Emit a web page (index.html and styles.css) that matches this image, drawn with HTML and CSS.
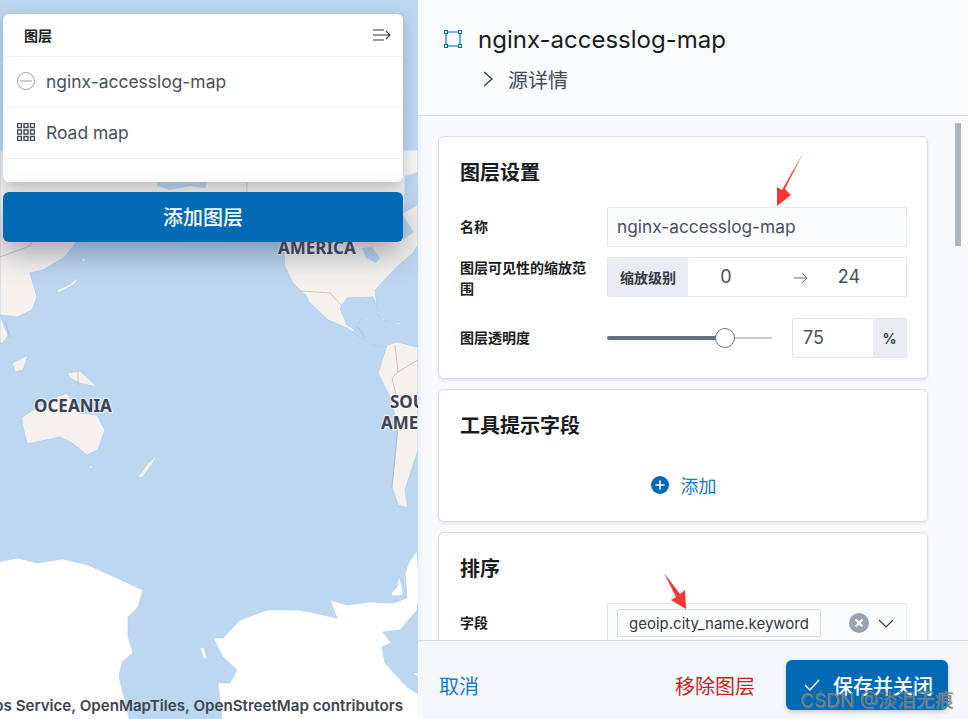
FILE: index.html
```html
<!DOCTYPE html>
<html lang="zh">
<head>
<meta charset="utf-8">
<title>nginx-accesslog-map</title>
<link rel="stylesheet" href="styles.css">
</head>
<body>
<div class="app">
  <section class="map">
    <svg class="map-art" viewBox="0 0 418 719" width="418" height="719">
      <g class="land">
        <path d="M0 150L418 150L418 160L418 245L413 253L397 267L375 290L377 307L373 297L347 298L340 308L347 325L355 330L362 318L353 332L370 345L383 347L370 344L347 328L328 320L310 303L300 290L293 283L285 267L283 241L77 241L65 257L43 270L30 273L37 297L32 310L17 317L0 315Z"/>
        <path d="M0 315L8 335L3 343L0 343Z"/>
        <path d="M57 290L70 284L78 277L76 283L68 288L58 293Z"/>
        <path d="M80 259L87 258L84 262Z"/>
        <path d="M377 315L388 321L383 320Z"/>
        <path d="M396 322L401 323L398 325Z"/>
        <path d="M12 363L28 355L23 370L15 372Z"/>
        <path d="M67 373L80 371L90 380L97 387L80 383L70 378Z"/>
        <path d="M22 417L33 410L57 397L67 393L80 413L97 415L105 430L98 450L87 455L72 443L60 437L27 444L22 423Z"/>
        <path d="M88 464L93 467L91 469Z"/>
        <path d="M137 478L148 463L157 455L155 460L143 477Z"/>
        <path d="M397 342L418 347L418 450L405 490L408 508L398 505L392 487L398 427L390 397L378 373L387 345Z"/>
      </g>
      <g class="water">
        <path d="M403 0H418V18L414 22L403 18Z"/>
        <path d="M403 44L410 43L417 34L418 47L403 48Z"/>
        <path d="M403 66L405 66L412 58L416 47L418 47V92L404 96L403 90Z"/>
        <path d="M404 104L418 110V150L403 150Z"/>
        <path d="M157 182L207 182L205 188L190 186L170 190L157 186Z"/>
        <path d="M405 176L418 172L418 205L402 214L414 232L403 240L403 215Z"/>
        <path d="M362 248L372 247L380 258L376 263L366 258Z"/>
        <path d="M302 292L306 294L313 311L309 306Z"/>
      </g>
      <g class="border">
        <path d="M0 257L30 246L32 241M247 182L247 192M5 320L10 338M78 371L78 385M301 291L330 293L342 306M358 327L365 338M395 345L398 372L392 378M398 372L418 360M392 378L396 395L418 400M398 427L392 487"/>
      </g>
      <g class="ice">
        <path d="M-2 562L18 558L37 563L63 559L88 565L117 578L143 590L138 607L128 617L128 637L133 653L122 662L119 677L130 721L-2 721Z"/>
        <path d="M222 721L218 683L230 683L237 670L223 657L213 638L223 638L240 620L267 610L300 610L337 618L330 600L347 605L370 602L393 603L407 598L405 573L409 562L417 551L420 590L417 610L400 630L383 632L391 643L382 647L385 663L407 687L420 695L420 721Z"/>
        <path d="M391 593L397 587L399 575L402 587L403 595L393 596Z"/>
        <path d="M412 673L420 673L420 678Z"/>
        <path d="M200 648L204 647L207 660L203 657Z"/>
      </g>
      <g class="labels">
        <text x="278" y="254">AMERICA</text>
        <text x="34" y="412">OCEANIA</text>
        <text x="390" y="408">SOU</text>
        <text x="381" y="429">AME</text>
      </g>
    </svg>
    <div class="overlay">
      <div class="toc">
        <div class="toc-head">
          <span class="toc-title">图层</span>
          <svg class="toc-collapse" viewBox="0 0 18 12" width="18" height="12"><path d="M0 1H11M0 6H17M0 11H11M13 2L17 6L13 10"/></svg>
        </div>
        <div class="toc-row">
          <svg class="toc-icon" viewBox="0 0 18 18" width="18" height="18"><circle class="ring" cx="9" cy="9" r="8.5"/><path class="ring" d="M3 9H15"/></svg>
          <span>nginx-accesslog-map</span>
        </div>
        <div class="toc-row">
          <svg class="toc-icon" viewBox="0 0 18 18" width="18" height="18"><path class="tiles" d="M.5.5h4v4h-4zM7 .5h4v4h-4zM13.500.5h4v4h-4zM.5 7h4v4h-4zM7 7h4v4h-4zM13.500 7h4v4h-4zM.5 13.500h4v4h-4zM7 13.500h4v4h-4zM13.500 13.500h4v4h-4z"/></svg>
          <span>Road map</span>
        </div>
      </div>
      <button class="add-layer" type="button">添加图层</button>
    </div>
    <div class="attribution">Elastic Maps Service, OpenMapTiles, OpenStreetMap contributors</div>
  </section>

  <section class="flyout">
    <header class="fly-head">
      <div class="fly-title">
        <svg class="layer-icon" viewBox="0 0 18 18" width="18" height="18"><path d="M3.500 2H14.500M3.500 16H14.500M2 3.500V14.500M16 3.500V14.500M.5.5h3v3h-3zM14.500.5h3v3h-3zM.5 14.500h3v3h-3zM14.500 14.500h3v3h-3z"/></svg>
        <h1>nginx-accesslog-map</h1>
      </div>
      <div class="fly-source">
        <svg class="chev" viewBox="0 0 10 16" width="10" height="16"><path d="M1 1L9 8L1 15"/></svg>
        <span>源详情</span>
      </div>
    </header>

    <div class="fly-body">
      <div class="card">
        <h2>图层设置</h2>
        <div class="row">
          <label>名称</label>
          <div class="field text-field">nginx-accesslog-map</div>
        </div>
        <div class="row">
          <label class="label-two">图层可见性的缩放范围</label>
          <div class="field range-field">
            <span class="prepend">缩放级别</span>
            <span class="range-a">0</span>
            <svg class="range-arrow" viewBox="0 0 14 12" width="14" height="12"><path d="M0 6H13M8 1L13 6L8 11"/></svg>
            <span class="range-b">24</span>
          </div>
        </div>
        <div class="row row-wide">
          <label>图层透明度</label>
          <div class="opacity">
            <div class="slider"><div class="slider-fill"></div><div class="slider-thumb"></div></div>
            <div class="field pct-field"><span class="pct-val">75</span><span class="pct-unit">%</span></div>
          </div>
        </div>
      </div>

      <div class="card">
        <h2>工具提示字段</h2>
        <div class="add-row">
          <svg viewBox="0 0 18 18" width="18" height="18"><circle class="plus-bg" cx="9" cy="9" r="9"/><path class="plus" d="M9 4.500V13.500M4.500 9H13.500"/></svg>
          <span>添加</span>
        </div>
      </div>

      <div class="card">
        <h2>排序</h2>
        <div class="row">
          <label>字段</label>
          <div class="field combo">
            <span class="pill">geoip.city_name.keyword</span>
            <span class="combo-tools">
              <svg viewBox="0 0 20 20" width="20" height="20"><circle class="clear-bg" cx="10" cy="10" r="10"/><path class="clear-x" d="M6.500 6.500L13.500 13.500M13.500 6.500L6.500 13.500"/></svg>
              <svg class="combo-chev" viewBox="0 0 16 9" width="16" height="9"><path d="M1 1L8 8L15 1"/></svg>
            </span>
          </div>
        </div>
      </div>
      <div class="scrollbar"></div>
    </div>

    <footer class="fly-foot">
      <a class="link">取消</a>
      <div class="foot-right">
        <a class="link danger">移除图层</a>
        <button class="save" type="button">
          <svg viewBox="0 0 16 12" width="16" height="12"><path d="M1 6L6 11L15 1"/></svg>
          <span>保存并关闭</span>
        </button>
      </div>
    </footer>
  </section>
</div>
<svg class="annotations" viewBox="0 0 968 719" width="968" height="719">
  <path d="M803 153L785 189L791 195L777 206L777 187L782 190Z"/>
  <path d="M664 573L680 594L685 590L686 609L671 600L676 597Z"/>
</svg>
<div class="watermark">CSDN @淡泪无痕</div>
</body>
</html>
```
FILE: styles.css
```css
* { box-sizing: border-box; }
html, body { margin: 0; height: 100%; overflow: hidden; }
body { font-family: Inter, "Noto Sans CJK SC", "Noto Sans", sans-serif; color: #343741; background: #f5f7fa; }
.app { display: flex; width: 968px; height: 719px; }
.annotations { position: absolute; left: 0; top: 0; display: block; pointer-events: none; }
.annotations path { fill: #fb3434; }

/* map */
.map { position: relative; width: 418px; height: 719px; flex: none; overflow: hidden; background: #bdd7f1; }
.map-art { position: absolute; left: 0; top: 0; display: block; }
.land path { fill: #f5f2ee; stroke: #a9cdf0; stroke-width: .8; }
.water path { fill: #bdd7f1; }
.border path { fill: none; stroke: #b3b0b2; stroke-width: .7; }
.ice path { fill: #fff; stroke: #a9cdf0; stroke-width: .6; }
.labels text { font: 700 17px "Noto Sans", sans-serif; fill: #3e4150; stroke: rgba(255,255,255,.55); stroke-width: 2.500px; paint-order: stroke; }
.overlay { position: relative; display: flex; flex-direction: column; gap: 10px; width: 400px; margin: 14px 0 0 3px; }
.toc { height: 168px; background: #fff; border-radius: 6px; box-shadow: 0 4px 14px rgba(50,60,80,.3); }
.toc-head { display: flex; align-items: center; justify-content: space-between; height: 43px; padding: 0 12px 0 21px; border-bottom: 1px solid #f0f2f5; }
.toc-title { font-size: 14px; font-weight: 700; color: #1a1c21; }
.toc-collapse path { fill: none; stroke: #343741; stroke-width: 1.100; }
.toc-row { display: flex; align-items: center; gap: 11px; height: 51px; padding: 0 0 2px 14px; border-bottom: 1px solid #f0f2f5; font-size: 17.450px; color: #4b4f5b; }
.toc-icon { flex: none; }
.ring { fill: none; stroke: #98a2b3; stroke-width: 1; }
.tiles { fill: none; stroke: #454a56; stroke-width: 1.400; }
.add-layer { height: 50px; padding: 0 0 2px; border: 0; border-radius: 6px; background: #006bb4; color: #fff; font: 500 20px Inter, "Noto Sans CJK SC", sans-serif; box-shadow: 0 12px 30px rgba(50,60,90,.42); }
.attribution { position: absolute; right: 15px; bottom: 4px; font-size: 15.150px; font-weight: 600; color: #3f4450; white-space: nowrap; }

/* flyout */
.flyout { position: relative; display: flex; flex-direction: column; width: 550px; height: 719px; flex: none; background: #f8fafd; box-shadow: inset 6px 0 6px -5px rgba(120,130,150,.15); }
.fly-head { height: 116px; padding: 19px 0 0 26px; background: #fafbfd; border-bottom: 1px solid #d8dde6; }
.fly-title { display: flex; align-items: center; gap: 16px; height: 40px; }
.layer-icon path { fill: none; stroke: #006bb4; stroke-width: 1.100; }
h1 { margin: 0; font-size: 24px; font-weight: 400; color: #1a1c21; }
.fly-source { display: flex; align-items: center; gap: 15px; height: 30px; margin: 5px 0 0 39px; font-size: 20px; color: #454a56; }
.chev { flex: none; }
.chev path { fill: none; stroke: #343741; stroke-width: 1.300; }
.fly-body { position: relative; flex: 1; min-height: 0; overflow: hidden; padding: 20px 0 0 20px; display: flex; flex-direction: column; gap: 10px; }
.card { flex: none; width: 490px; padding: 20px 20px 20px 21px; background: #fff; border: 1px solid #d8dde6; border-radius: 6px; box-shadow: 0 2px 3px rgba(100,110,130,.12); }
h2 { margin: 0 0 18px; font-size: 20px; line-height: 32px; font-weight: 700; color: #1a1c21; }
.row { display: grid; grid-template-columns: 147px 300px; grid-template-rows: 40px; align-items: center; height: 40px; margin-top: 10px; }
h2 + .row { margin-top: 0; }
.row-wide { margin-top: 21px; }
label { padding: 0 10px 2px 0; font-size: 14px; line-height: 21px; font-weight: 600; color: #1a1c21; }
.label-two { padding-bottom: 0; margin-top: 2px; }
.field { height: 40px; background: #fbfcfd; border: 1px solid #e3e7ef; border-radius: 2px; }
.text-field { padding-left: 9px; font-size: 17.300px; line-height: 38px; color: #4b4f5b; }
.range-field { display: flex; align-items: center; font-size: 18px; color: #4b4f5b; background: #fff; }
.prepend { display: flex; align-items: center; justify-content: center; width: 80px; height: 100%; background: #e9edf3; font-size: 14px; font-weight: 600; color: #343741; }
.range-a { width: 76px; margin-top: -2px; text-align: center; }
.range-arrow { margin: 2px 0 0 30px; flex: none; }
.range-arrow path { fill: none; stroke: #69707d; stroke-width: 1; }
.range-b { width: 82px; margin-top: -2px; text-align: center; }
.opacity { display: flex; align-items: center; gap: 20px; }
.slider { position: relative; width: 165px; height: 2px; background: #c2c8d0; }
.slider-fill { width: 118px; height: 4px; margin-top: -1px; background: #69707d; border-radius: 2px; }
.slider-thumb { position: absolute; left: 108px; top: -9px; width: 20px; height: 20px; border-radius: 50%; background: #fff; border: 1.500px solid #69707d; }
.pct-field { display: flex; width: 115px; background: #fff; font-size: 18px; color: #4b4f5b; }
.pct-val { flex: 1; padding-left: 10px; line-height: 38px; }
.pct-unit { display: flex; align-items: center; justify-content: center; width: 33px; background: #e9edf3; font-size: 14px; font-weight: 600; color: #343741; }
.add-row { display: flex; align-items: center; justify-content: center; gap: 12px; height: 36px; margin: 25px 0 -2px; font-size: 18px; color: #1a77bd; }
.plus-bg { fill: #006bb4; }
.plus { fill: none; stroke: #fff; stroke-width: 1.600; }
.combo { display: flex; align-items: center; justify-content: space-between; align-self: start; height: 60px; padding: 0 12px 20px 9px; }
.pill { display: flex; align-items: center; height: 28px; padding: 0 11px; background: #fff; border: 1px solid #d3dae6; border-radius: 2px; font-size: 15px; color: #343741; white-space: nowrap; }
.combo-tools { display: flex; align-items: center; gap: 9px; }
.clear-bg { fill: #98a2b3; }
.clear-x { fill: none; stroke: #fff; stroke-width: 2; }
.combo-chev path { fill: none; stroke: #343741; stroke-width: 1.200; }
.scrollbar { position: absolute; left: 537px; top: 7px; width: 6px; height: 123px; background: #aeb3bd; }
.fly-foot { display: flex; align-items: center; justify-content: space-between; height: 79px; flex: none; padding: 10px 20px 0 21px; background: #f5f7fa; border-top: 1px solid #d3dae6; font-size: 20px; position: relative; }
.link { color: #1a77bd; }
.danger { color: #bd271e; }
.foot-right { display: flex; align-items: center; gap: 31px; }
.save { display: flex; align-items: center; gap: 13px; width: 162px; height: 50px; padding: 0 0 0 18px; border: 0; border-radius: 6px; background: #006bb4; color: #fff; font: 500 20px Inter, "Noto Sans CJK SC", sans-serif; box-shadow: 0 2px 4px rgba(60,70,90,.25); }
.save svg { flex: none; }
.save path { fill: none; stroke: #fff; stroke-width: 1.300; }
.watermark { position: absolute; left: 800px; top: 689px; font-size: 19px; line-height: 24px; color: rgba(130,140,150,.9); text-shadow: 0 0 1px rgba(40,50,60,.7), 1px 1px 1px rgba(255,255,255,.25); white-space: nowrap; }
```
